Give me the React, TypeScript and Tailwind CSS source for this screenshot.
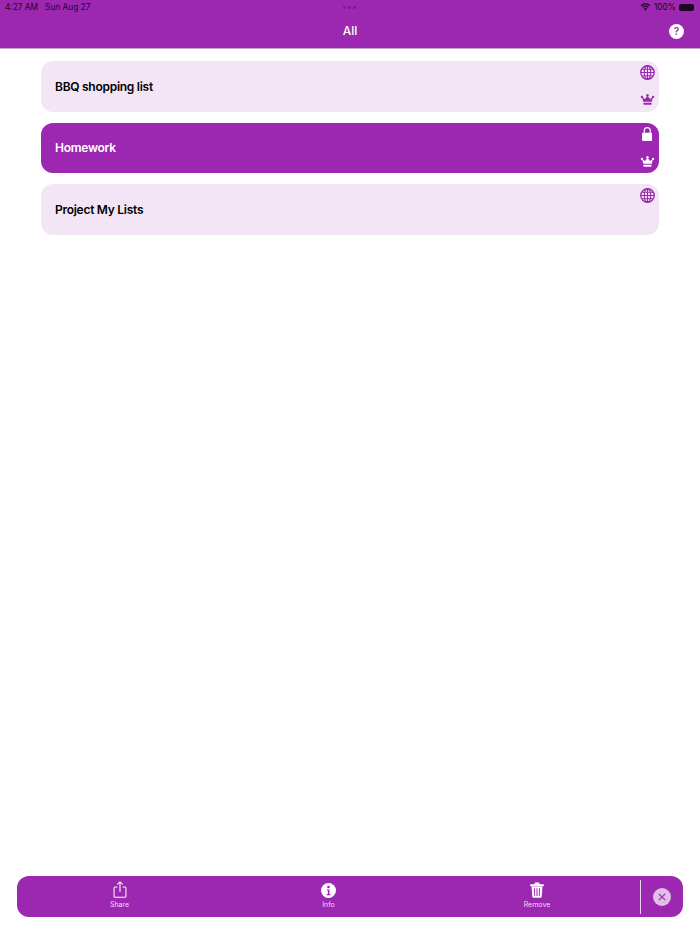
const font = { fontFamily: "Inter, 'Liberation Sans', sans-serif" }

const GlobeIcon = ({ className }: { className?: string }) => (
  <svg viewBox="0 0 16 16" className={className} fill="none" stroke="currentColor" strokeWidth="1.100">
    <circle cx="8" cy="8" r="7.200" strokeWidth="1.400" />
    <ellipse cx="8" cy="8" rx="3.500" ry="7.200" />
    <path d="M8 1v14M1 8h14M2 4.500h12M2 11.500h12" />
  </svg>
)

const LockIcon = ({ className }: { className?: string }) => (
  <svg viewBox="0 0 12 16" className={className} fill="currentColor">
    <path d="M1.500 6.500h9A1.500 1.500 0 0 1 12 8v6.500a1.500 1.500 0 0 1-1.500 1.500h-9A1.500 1.500 0 0 1 0 14.500V8a1.500 1.500 0 0 1 1.500-1.500z" />
    <path d="M2.600 7V4.200a3.400 3.400 0 0 1 6.800 0V7" fill="none" stroke="currentColor" strokeWidth="1.400" />
  </svg>
)

const CrownIcon = ({ className }: { className?: string }) => (
  <svg viewBox="0 0 16 13" className={className} fill="currentColor">
    <circle cx="1.500" cy="3.400" r="1.400" />
    <circle cx="8" cy="1.500" r="1.400" />
    <circle cx="14.500" cy="3.400" r="1.400" />
    <path d="M1.500 3.600 5 6 8 2l3 4 3.500-2.400L13 9.200H3z" />
    <path d="M3 10.200h10l-.5 2.600h-9z" />
  </svg>
)

const ShareIcon = () => (
  <svg viewBox="0 0 16 20" className="h-[17px] w-[14px]" fill="none" stroke="currentColor" strokeWidth="1.200">
    <path d="M5 7H2.200A1.200 1.200 0 0 0 1 8.200v9.600A1.200 1.200 0 0 0 2.200 19h11.600a1.200 1.200 0 0 0 1.200-1.200V8.200A1.200 1.200 0 0 0 13.800 7H11" />
    <path d="M8 13V1M4.800 4 8 1l3.200 3" />
  </svg>
)

const InfoIcon = () => (
  <svg viewBox="0 0 16 16" className="h-[15px] w-[15px]">
    <circle cx="8" cy="8" r="8" fill="#ffffff" />
    <circle cx="8" cy="4.300" r="1.400" fill="#9c27b0" />
    <path d="M6.200 6.800H9v5h1v1.200H6.200v-1.200h1.200V8H6.200z" fill="#9c27b0" />
  </svg>
)

const TrashIcon = () => (
  <svg viewBox="0 0 14 16" className="h-[16px] w-[14px]">
    <path d="M0.500 2.600h13v1.400H.500zM4.500 2.600 5.200.800h3.600l.7 1.800" fill="#ffffff" stroke="#ffffff" strokeWidth=".6" />
    <path
      fillRule="evenodd"
      fill="#ffffff"
      d="M1.500 4.500h11l-.8 10a1.300 1.300 0 0 1-1.300 1.200H3.600a1.300 1.300 0 0 1-1.300-1.200zM4 6.200l.3 7.800h.9L5 6.200zm2.500 0V14h1V6.200zm2.500 0L8.800 14h.9l.3-7.800z"
    />
  </svg>
)

const WifiIcon = () => (
  <svg viewBox="0 0 16 12" className="h-[8px] w-[11px]" fill="#1c0824">
    <path d="M8 2.400c2.300 0 4.400.9 5.900 2.400L15.200 3.500A10.200 10.200 0 0 0 8 .5 10.200 10.200 0 0 0 .8 3.500l1.300 1.300A8.300 8.300 0 0 1 8 2.400z" />
    <path d="M8 5.800c1.400 0 2.600.5 3.500 1.400l1.300-1.300A6.800 6.800 0 0 0 8 3.900a6.800 6.800 0 0 0-4.800 2l1.300 1.300A5 5 0 0 1 8 5.800z" />
    <path d="M8 7.400c-.9 0-1.700.4-2.300 1L8 11.500l2.300-3.100c-.6-.6-1.400-1-2.300-1z" />
  </svg>
)

type ListItem = {
  name: string
  selected: boolean
  locked: boolean
  crown: boolean
}

const lists: ListItem[] = [
  { name: "BBQ shopping list", selected: false, locked: false, crown: true },
  { name: "Homework", selected: true, locked: true, crown: true },
  { name: "Project My Lists", selected: false, locked: false, crown: false },
]

const ListCard = ({ item }: { item: ListItem }) => (
  <div
    className={`flex h-[50.5px] items-center justify-between rounded-[12px] pl-[14px] pr-[4px] ${
      item.selected ? "bg-[#9c27b0] text-white" : "bg-[#f3e5f5] text-black"
    }`}
  >
    <span className="pt-[1px] text-[12px] leading-none font-semibold tracking-[-0.27px]">{item.name}</span>
    <div
      className={`flex h-full w-[16px] flex-col items-center justify-between pt-[4px] pb-[6.500px] ${
        item.selected ? "text-white" : "text-[#9c27b0]"
      }`}
    >
      {item.locked ? <LockIcon className="h-[14px] w-[10.500px]" /> : <GlobeIcon className="h-[15px] w-[15px]" />}
      {item.crown && <CrownIcon className="h-[11px] w-[15px]" />}
    </div>
  </div>
)

const ToolbarItem = ({ label, icon, className }: { label: string; icon: React.ReactNode; className?: string }) => (
  <div className={`flex flex-col items-center gap-[3px] pb-[4px] text-white ${className ?? ""}`}>
    <div className="flex h-[17px] items-end">{icon}</div>
    <span className="text-[7px] leading-[8px] text-[#f0dcf4]">{label}</span>
  </div>
)

export default function App() {
  return (
    <div className="flex h-[934px] w-[700px] flex-col bg-white" style={font}>
      <header className="h-[49px] border-b border-[#c9a6d2] bg-[#9c27b0]">
        <div className="flex h-[14px] items-center justify-between pl-[5px] pr-[6px] text-[8.300px] text-[#1c0824]">
          <div className="flex w-[120px] gap-[7px]">
            <span>4:27 AM</span>
            <span>Sun Aug 27</span>
          </div>
          <div className="flex gap-[2px]">
            <span className="h-[3px] w-[3px] rounded-full bg-[#7a1a8c]" />
            <span className="h-[3px] w-[3px] rounded-full bg-[#7a1a8c]" />
            <span className="h-[3px] w-[3px] rounded-full bg-[#7a1a8c]" />
          </div>
          <div className="flex w-[120px] items-center justify-end gap-[3px]">
            <WifiIcon />
            <span>100%</span>
            <span className="h-[7px] w-[15px] rounded-[2px] bg-[#1c0824]" />
          </div>
        </div>
        <div className="grid h-[34px] grid-cols-[1fr_auto_1fr] items-center pr-[16px]">
          <span />
          <span className="pl-[16px] text-[12px] leading-none font-medium text-white">All</span>
          <span className="flex h-[15px] w-[15px] items-center justify-center justify-self-end rounded-full bg-white text-[10px] leading-none font-semibold text-[#9c27b0]">
            ?
          </span>
        </div>
      </header>

      <main className="flex flex-1 flex-col gap-[11px] px-[41px] pt-[12px]">
        {lists.map((item) => (
          <ListCard key={item.name} item={item} />
        ))}
      </main>

      <div className="mx-[17px] mb-[17px] grid h-[41px] grid-cols-[207px_209px_207px_1px_1fr] items-center rounded-[12px] bg-[#9c27b0]">
        <ToolbarItem label="Share" icon={<ShareIcon />} className="pr-[2px]" />
        <ToolbarItem label="Info" icon={<InfoIcon />} />
        <ToolbarItem label="Remove" icon={<TrashIcon />} className="pl-[1px]" />
        <div className="h-[34px] w-[1px] bg-[#ead3ef]" />
        <div className="flex justify-center">
          <span className="flex h-[18px] w-[18px] items-center justify-center rounded-full bg-[#e1bee7] text-[#9c27b0]">
            <svg viewBox="0 0 10 10" className="h-[8px] w-[8px]" stroke="currentColor" strokeWidth="1.500">
              <path d="M1 1l8 8M9 1l-8 8" />
            </svg>
          </span>
        </div>
      </div>
    </div>
  )
}
